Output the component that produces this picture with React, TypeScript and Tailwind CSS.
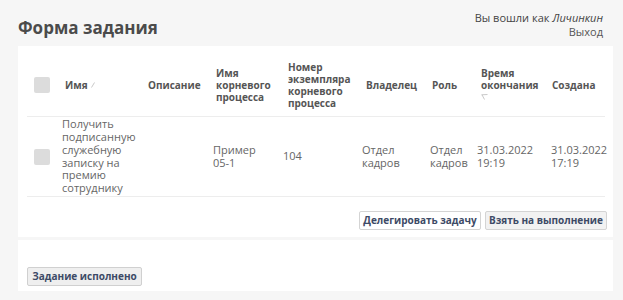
import React from 'react';

const font = { fontFamily: '"Open Sans", "DejaVu Sans", sans-serif' };

const cols = 'grid grid-cols-[31px_85px_67px_70px_78px_68px_48px_72px_59px]';

function Checkbox() {
  return <div className="w-4 h-4 rounded-[2px] bg-[#dcdcdc] ml-[7px]" />;
}

export default function App() {
  return (
    <div className="w-[623px] h-[300px] bg-[#f6f6f6] text-[#555] overflow-hidden" style={font}>
      {/* Top bar */}
      <div className="flex justify-between pl-[18px] pr-[20px] h-[46px]">
        <h1 className="text-[17px] font-bold text-[#4b4b4b] pt-[16px] leading-[24px]">Форма задания</h1>
        <div className="text-right text-[11px] leading-[14px] text-[#444] pt-[11px]">
          <div>
            Вы вошли как <i>Личинкин</i>
          </div>
          <div className="text-[#555]">Выход</div>
        </div>
      </div>

      {/* Task table card */}
      <div className="ml-[18px] mr-[10px] bg-white h-[191px] pl-[9px] pr-[8px]">
        <div className={`${cols} items-center h-[71px] pt-[8px] border-b border-[#ededed] text-[10px] font-bold leading-[12px] text-[#555]`}>
          <Checkbox />
          <div className="pl-[7px] flex items-center gap-[3px]">
            Имя
            <svg width="4" height="6" viewBox="0 0 4 6" className="text-[#bbb]">
              <path d="M3.5 0.5 L0.5 5.5" stroke="currentColor" strokeWidth="0.8" />
            </svg>
          </div>
          <div className="pl-[5px]">Описание</div>
          <div className="pl-[6px]">Имя<br />корневого<br />процесса</div>
          <div className="pl-[8px]">Номер<br />экземпляра<br />корневого<br />процесса</div>
          <div className="pl-[8px]">Владелец</div>
          <div className="pl-[6px]">Роль</div>
          <div className="pl-[7px]">
            Время<br />окончания
            <div className="h-[12px] flex items-center">
              <svg width="7" height="6" viewBox="0 0 7 6" className="text-[#bbb]">
                <path d="M0.5 0.8 L6.5 0.5 M1 0.8 L3.5 5.5" stroke="currentColor" strokeWidth="0.8" fill="none" />
              </svg>
            </div>
          </div>
          <div className="pl-[6px]">Создана</div>
        </div>

        <div className={`${cols} items-center h-[80px] border-b border-[#ededed] text-[11px] leading-[12.8px] text-[#666]`}>
          <Checkbox />
          <div className="pl-[4px]">Получить подписанную служебную записку на премию сотруднику</div>
          <div />
          <div className="pl-[3px]">Пример<br />05-1</div>
          <div className="pl-[3px] text-[#666]">104</div>
          <div className="pl-[4px]">Отдел<br />кадров</div>
          <div className="pl-[4px]">Отдел<br />кадров</div>
          <div className="pl-[3px]">31.03.2022<br />19:19</div>
          <div className="pl-[5px]">31.03.2022<br />17:19</div>
        </div>

        <div className="flex justify-end gap-[4px] mt-[14px] -mr-[2px]">
          <button className="h-[19px] w-[122px] border border-[#d4d4d4] rounded-[2px] bg-white text-[10px] font-bold text-[#3d4a66]">
            Делегировать задачу
          </button>
          <button className="h-[19px] w-[122px] border border-[#d4d4d4] rounded-[2px] bg-[#f2f2f2] text-[10px] font-bold text-[#3d4a66]">
            Взять на выполнение
          </button>
        </div>
      </div>

      {/* Completion card */}
      <div className="ml-[18px] mr-[10px] mt-[3px] bg-white h-[51px] pl-[9px] pt-[22px]">
        <button className="h-[19px] w-[115px] border border-[#d0d0d0] rounded-[2px] bg-[#efefef] text-[10px] font-bold text-[#3d4a66]">
          Задание исполнено
        </button>
      </div>
    </div>
  );
}
